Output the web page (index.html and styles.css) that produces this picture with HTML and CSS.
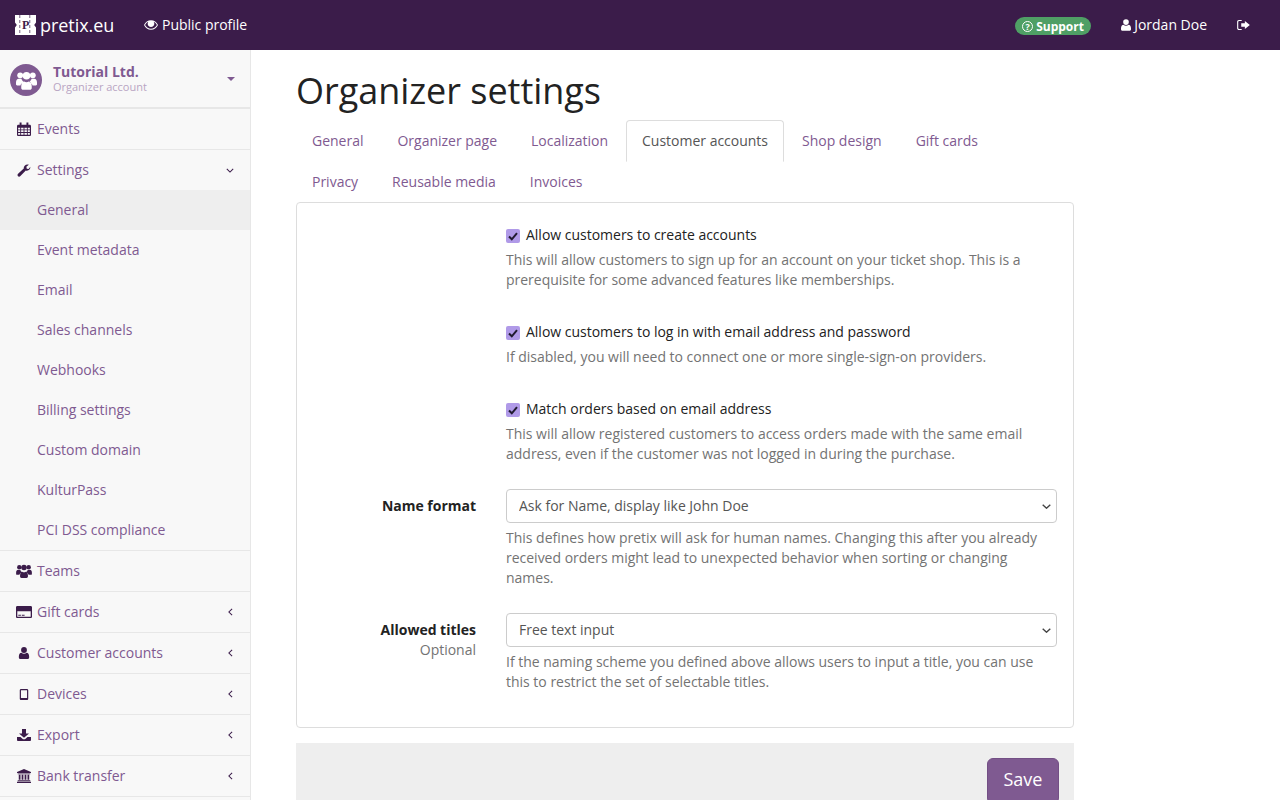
FILE: index.html
```html
<!DOCTYPE html>
<html lang="en">
<head>
<meta charset="utf-8">
<title>Organizer settings</title>
<link rel="stylesheet" href="styles.css">
</head>
<body>
<svg class="defs" width="0" height="0" aria-hidden="true">
  <symbol id="i-users" viewBox="0 0 18 16"><circle cx="3.6" cy="3.600" r="2.500"/><circle cx="14.4" cy="3.600" r="2.500"/><circle cx="9" cy="4" r="3.200"/><path d="M0 9.800C0 7.600 1 6.500 2.400 6.500h2.300c.3 1.200 1 2.100 1.800 2.700-1.400.6-2.400 1.800-2.700 3.100H1c-.6 0-1-.4-1-1zM18 9.800C18 7.600 17 6.500 15.600 6.500h-2.300c-.3 1.200-1 2.100-1.800 2.700 1.400.6 2.400 1.800 2.700 3.100H17c.6 0 1-.4 1-1zM4.500 12.800C4.500 10.600 5.800 8.800 7 8.800c.6.400 1.200.7 2 .7s1.400-.3 2-.7c1.200 0 2.500 1.800 2.500 4v1.600c0 .9-.7 1.600-1.600 1.600H6.100c-.9 0-1.600-.7-1.600-1.600z"/></symbol>
  <symbol id="i-cal" viewBox="0 0 16 16"><path fill-rule="evenodd" d="M3 .5h2.200V3h5.600V.5H13V3h1.500C15.300 3 16 3.700 16 4.500v10c0 .8-.7 1.500-1.500 1.500h-13C.7 16 0 15.300 0 14.500v-10C0 3.700.7 3 1.500 3H3zM1.300 6.500v2h2.400v-2zm3.400 0v2h2.800v-2zm3.800 0v2h2.800v-2zm3.800 0v2h2.400v-2zM1.300 9.500v2h2.400v-2zm3.400 0v2h2.800v-2zm3.800 0v2h2.800v-2zm3.800 0v2h2.400v-2zM1.300 12.500v2.200h2.400v-2.200zm3.400 0v2.200h2.800v-2.200zm3.800 0v2.200h2.800v-2.200zm3.800 0v2.200h2.400v-2.200z"/></symbol>
  <symbol id="i-wrench" viewBox="0 0 16 16"><path d="M15.800 3.500c.3 2.500-1.700 4.800-4.200 4.800-.5 0-1-.1-1.400-.3L3.600 14.900c-.9.900-2.300.9-3 .1-.8-.8-.7-2.100.1-2.900l7-6.500C7.400 3 9.500.5 12.500.5c.5 0 1 .1 1.400.3l-3 2.700.5 2.300 2.300.5z"/></symbol>
  <symbol id="i-card" viewBox="0 0 16 12"><path fill-rule="evenodd" d="M1.300 0h13.400C15.400 0 16 .6 16 1.300v9.400c0 .7-.6 1.300-1.300 1.300H1.300C.6 12 0 11.400 0 10.700V1.300C0 .6.600 0 1.300 0zM1.300 5.300v5.400h13.400V5.300zM2.300 8.800h2.600v1H2.300zm3.500 0h2.800v1H5.800z"/><path fill="currentColor" d="M0 2.500h16V5H0z"/></symbol>
  <symbol id="i-user" viewBox="0 0 12 14"><circle cx="6" cy="3.500" r="3.400"/><path d="M3 6.700c.8.700 1.800 1.100 3 1.100s2.200-.4 3-1.100c1.800 0 3 1.700 3 4.500v1c0 1-.7 1.800-1.700 1.800H1.700C.7 14 0 13.200 0 12.200v-1C0 8.400 1.200 6.700 3 6.700z"/></symbol>
  <symbol id="i-tablet" viewBox="0 0 10 13"><path fill-rule="evenodd" d="M1.500 0h7C9.300 0 10 .7 10 1.500v10c0 .8-.7 1.500-1.500 1.500h-7C.7 13 0 12.300 0 11.500v-10C0 .7.700 0 1.500 0zm-.1 1.400v9.300h7.200V1.400z"/></symbol>
  <symbol id="i-download" viewBox="-1 -1 16 14"><path d="M5 0h4v4.500h3L7 8.800 2 4.500h3z"/><path d="M0 8h3.500L6 10.300h2L10.500 8H14v3c0 .5-.5 1-1 1H1c-.5 0-1-.5-1-1z"/></symbol>
  <symbol id="i-bank" viewBox="0 0 16 16"><path d="M8 0l8 3.300v1.200H0V3.300zM.8 5h14.400v1.100H.8zM2 6.600h2v5.700H2zM5.300 6.600h2v5.700h-2zM8.700 6.600h2v5.700h-2zM12 6.600h2v5.700h-2zM.8 12.800h14.400v1.300H.8zM0 14.500h16V16H0z"/></symbol>
  <symbol id="i-eye" viewBox="0 0 16 11"><path fill-rule="evenodd" d="M8 0c3.500 0 6.400 2.200 8 5.500C14.400 8.800 11.500 11 8 11S1.600 8.800 0 5.500C1.600 2.200 4.500 0 8 0zM5 1.800C3.400 2.500 2.100 3.800 1.200 5.500 2.700 8.100 5.200 9.800 8 9.800s5.300-1.700 6.800-4.300c-.9-1.700-2.200-3-3.800-3.700.5.600.8 1.400.8 2.200 0 2-1.700 3.700-3.800 3.700S4.200 6 4.200 4c0-.8.300-1.600.8-2.200z"/></symbol>
  <symbol id="i-signout" viewBox="0 0 14 11"><path fill-rule="evenodd" d="M2 0h3v1.200H2.200c-.6 0-1 .4-1 1v6.600c0 .6.400 1 1 1H5V11H2c-1.100 0-2-.9-2-2V2C0 .9.900 0 2 0z"/><path d="M8.500 1L14 5.500 8.500 10V7.300H4.500V3.700h4z"/></symbol>
</svg>

<header class="topbar">
  <a class="brand">
    <svg class="logo" viewBox="0 0 21 20" aria-hidden="true"><path class="logo-bg" d="M0 0h21v7.500l-1.800 2.500 1.800 2.500V20H0v-7.500L1.800 10 0 7.500z"/><path class="logo-cut" d="M4.500 0h.7v3h-.7zM4.500 5h.7v3h-.7zM4.500 10h.7v3h-.7zM4.500 15h.7v3h-.7zM14.500 0h.7v3h-.7zM14.500 5h.7v3h-.7zM14.500 10h.7v3h-.7zM14.500 15h.7v3h-.7z"/><text class="logo-p" x="7" y="14">P</text></svg>
    <span>pretix.eu</span>
  </a>
  <a class="toplink profile"><svg class="ic-eye"><use href="#i-eye"/></svg>Public profile</a>
  <div class="top-right">
    <a class="support"><span class="q">?</span>Support</a>
    <a class="toplink user"><svg class="ic-user-top"><use href="#i-user"/></svg>Jordan Doe</a>
    <a class="signout"><svg class="ic-signout"><use href="#i-signout"/></svg></a>
  </div>
</header>

<div class="app">
  <aside class="sidebar">
    <div class="org">
      <span class="avatar"><svg class="ic-avatar"><use href="#i-users"/></svg></span>
      <div class="org-text">
        <strong>Tutorial Ltd.</strong>
        <small>Organizer account</small>
      </div>
      <span class="caret"></span>
    </div>
    <nav>
      <a class="item"><svg class="ic h14"><use href="#i-cal"/></svg>Events</a>
      <div class="group">
        <a class="item plain"><svg class="ic h13"><use href="#i-wrench"/></svg>Settings<svg class="chev" viewBox="0 0 10 6"><path d="M1 1l4 4 4-4"/></svg></a>
        <a class="sub active">General</a>
        <a class="sub">Event metadata</a>
        <a class="sub">Email</a>
        <a class="sub">Sales channels</a>
        <a class="sub">Webhooks</a>
        <a class="sub">Billing settings</a>
        <a class="sub">Custom domain</a>
        <a class="sub">KulturPass</a>
        <a class="sub">PCI DSS compliance</a>
      </div>
      <a class="item"><svg class="ic h14"><use href="#i-users"/></svg>Teams</a>
      <a class="item"><svg class="ic h12"><use href="#i-card"/></svg>Gift cards<svg class="chev left" viewBox="0 0 6 10"><path d="M5 1L1 5l4 4"/></svg></a>
      <a class="item"><svg class="ic h12"><use href="#i-user"/></svg>Customer accounts<svg class="chev left" viewBox="0 0 6 10"><path d="M5 1L1 5l4 4"/></svg></a>
      <a class="item"><svg class="ic h11"><use href="#i-tablet"/></svg>Devices<svg class="chev left" viewBox="0 0 6 10"><path d="M5 1L1 5l4 4"/></svg></a>
      <a class="item"><svg class="ic h14"><use href="#i-download"/></svg>Export<svg class="chev left" viewBox="0 0 6 10"><path d="M5 1L1 5l4 4"/></svg></a>
      <a class="item"><svg class="ic h14"><use href="#i-bank"/></svg>Bank transfer<svg class="chev left" viewBox="0 0 6 10"><path d="M5 1L1 5l4 4"/></svg></a>
    </nav>
  </aside>

  <main class="content">
    <h1>Organizer settings</h1>
    <ul class="tabs">
      <li><a>General</a></li>
      <li><a>Organizer page</a></li>
      <li><a>Localization</a></li>
      <li class="current"><a>Customer accounts</a></li>
      <li><a>Shop design</a></li>
      <li><a>Gift cards</a></li>
      <li><a>Privacy</a></li>
      <li><a>Reusable media</a></li>
      <li><a>Invoices</a></li>
    </ul>
    <form class="panel">
      <div class="row check-row">
        <div></div>
        <div>
          <label class="check"><input type="checkbox" checked>Allow customers to create accounts</label>
          <p class="help">This will allow customers to sign up for an account on your ticket shop. This is a prerequisite for some advanced features like memberships.</p>
        </div>
      </div>
      <div class="row check-row">
        <div></div>
        <div>
          <label class="check"><input type="checkbox" checked>Allow customers to log in with email address and password</label>
          <p class="help">If disabled, you will need to connect one or more single-sign-on providers.</p>
        </div>
      </div>
      <div class="row">
        <div></div>
        <div>
          <label class="check"><input type="checkbox" checked>Match orders based on email address</label>
          <p class="help">This will allow registered customers to access orders made with the same email address, even if the customer was not logged in during the purchase.</p>
        </div>
      </div>
      <div class="row">
        <div class="field-label"><b>Name format</b></div>
        <div>
          <select class="select"><option>Ask for Name, display like John Doe</option></select>
          <p class="help">This defines how pretix will ask for human names. Changing this after you already received orders might lead to unexpected behavior when sorting or changing names.</p>
        </div>
      </div>
      <div class="row last">
        <div class="field-label"><b>Allowed titles</b><span>Optional</span></div>
        <div>
          <select class="select"><option>Free text input</option></select>
          <p class="help">If the naming scheme you defined above allows users to input a title, you can use this to restrict the set of selectable titles.</p>
        </div>
      </div>
    </form>
    <div class="actions"><button class="save" type="button">Save</button></div>
  </main>
</div>
</body>
</html>
```
FILE: styles.css
```css
* { box-sizing: border-box; }
html, body { margin: 0; height: 100%; overflow: hidden; }
body { font: 14px/20px "Open Sans", sans-serif; letter-spacing: -0.01px; color: #222; background: #fff; }
.defs { position: absolute; }
svg { fill: currentColor; display: block; }

.topbar { height: 50px; background: #3b1c4a; color: #fff; display: flex; align-items: center; }
.brand { display: flex; align-items: center; width: 144px; padding-left: 15px; font-size: 18px; letter-spacing: -0.05px; }
.logo { width: 21px; height: 20px; margin-right: 4px; }
.logo-bg { fill: #fff; }
.logo-cut { fill: #3b1c4a; }
.logo-p { font: 700 12px "Liberation Serif", serif; fill: #3b1c4a; }
.toplink { display: flex; align-items: center; }
.ic-eye { width: 14px; height: 10px; margin-right: 4px; }
.top-right { margin-left: auto; display: flex; align-items: center; }
.support { display: flex; align-items: center; height: 18px; width: 76px; margin: 2px 30px 0 0; padding: 1px 0 0 7px; border-radius: 10px; background: #4f9f65; font-size: 12px; font-weight: 700; }
.q { width: 11px; height: 11px; margin-right: 3px; border: 1px solid #fff; border-radius: 50%; font-size: 9px; line-height: 9px; text-align: center; font-weight: 700; }
.ic-user-top { width: 10px; height: 12px; margin-right: 3px; }
.signout { margin: 0 30px; }
.ic-signout { width: 13px; height: 10px; }

.app { display: flex; height: 750px; }
.sidebar { width: 251px; flex: none; background: #f8f8f8; border-right: 1px solid #e7e7e7; }
.org { height: 59px; display: flex; align-items: center; padding: 3px 15px 0 10px; border-bottom: 2px solid #e7e7e7; }
.avatar { width: 32px; height: 32px; flex: none; border-radius: 50%; background: #7f5a91; color: #fff; display: flex; align-items: center; justify-content: center; }
.ic-avatar { width: 21px; height: 19px; }
.org-text { flex: 1; margin: -3px 0 0 11px; display: flex; flex-direction: column; }
.org-text strong { color: #7f5a91; line-height: 16px; }
.org-text small { color: #b8a5c3; font-size: 11px; line-height: 14px; }
.caret { width: 0; height: 0; margin-top: -2px; border: 4px solid transparent; border-top-color: #7f5a91; border-bottom: 0; }

.item { height: 41px; padding-left: 16px; padding-right: 16px; display: flex; align-items: center; color: #7f5a91; border-bottom: 1px solid #e7e7e7; }
.item.plain { height: 40px; border-bottom: 0; }
.group { border-bottom: 1px solid #e7e7e7; }
.ic { flex: none; width: 16px; margin-right: 5px; color: #3b1c4a; }
.h14 { height: 14px; }
.h13 { height: 13px; }
.h12 { height: 12px; }
.h11 { height: 11px; }
.chev { margin-left: auto; fill: none; stroke: #3b1c4a; stroke-width: 1.300; }
.chev { width: 8px; height: 5px; margin-right: 0; }
.chev.left { width: 5px; height: 8px; margin-right: 1px; }
.sub { display: block; height: 40px; line-height: 40px; padding-left: 37px; color: #7f5a91; }
.sub.active { background: #eee; }

.content { width: 778px; margin-left: 45px; }
h1 { margin: 21px 0 9px; font-size: 36px; line-height: 40px; font-weight: 400; letter-spacing: -0.03px; }
.tabs { list-style: none; margin: 0; padding: 0; display: flex; flex-wrap: wrap; }
.tabs li { margin: 0 2px -1px 0; }
.tabs a { display: block; padding: 10px 15px; border: 1px solid transparent; border-radius: 4px 4px 0 0; color: #7f5a91; }
.tabs .current { position: relative; z-index: 1; }
.tabs .current a { color: #555; background: #fff; border-color: #ddd #ddd #fff; }

.panel { border: 1px solid #ddd; border-radius: 4px; padding: 22px 16px 35px 0; }
.row { display: grid; grid-template-columns: 179px 551px; column-gap: 30px; margin-bottom: 25px; }
.check-row { margin-bottom: 32px; }
.last { margin-bottom: 0; }
.check { display: flex; align-items: center; }
.check input { appearance: none; width: 14px; height: 14px; margin: 2px 6px 0 0; border-radius: 2px; background: #b09ae8 url("data:image/svg+xml,%3Csvg xmlns='http://www.w3.org/2000/svg' viewBox='0 0 14 14'%3E%3Cpath d='M3 7.500l2.800 2.800L11 4.200' fill='none' stroke='%23201a30' stroke-width='2'/%3E%3C/svg%3E") center / 14px 14px no-repeat; }
.help { margin: 5px 0 0; color: #737373; }
.field-label { padding-top: 7px; text-align: right; display: flex; flex-direction: column; }
.field-label span { color: #737373; }
.select { appearance: none; display: block; width: 100%; height: 34px; padding: 0 24px 0 12px; border: 1px solid #ccc; border-radius: 4px; background: #fff url("data:image/svg+xml,%3Csvg xmlns='http://www.w3.org/2000/svg' viewBox='0 0 9 5'%3E%3Cpath d='M.7.7l3.800 3.500L8.300.7' fill='none' stroke='%23444' stroke-width='1.400'/%3E%3C/svg%3E") right 5px center / 9px 5px no-repeat; color: #555; font: 14px/20px "Open Sans", sans-serif; letter-spacing: -0.01px; }

.actions { margin-top: 15px; padding: 15px; background: #eee; display: flex; justify-content: flex-end; }
.save { height: 46px; width: 72px; padding: 0 0 4px; border: 1px solid #734f85; border-radius: 6px; background: #7f5a91; color: #fff; font: 18px "Open Sans", sans-serif; }
```
